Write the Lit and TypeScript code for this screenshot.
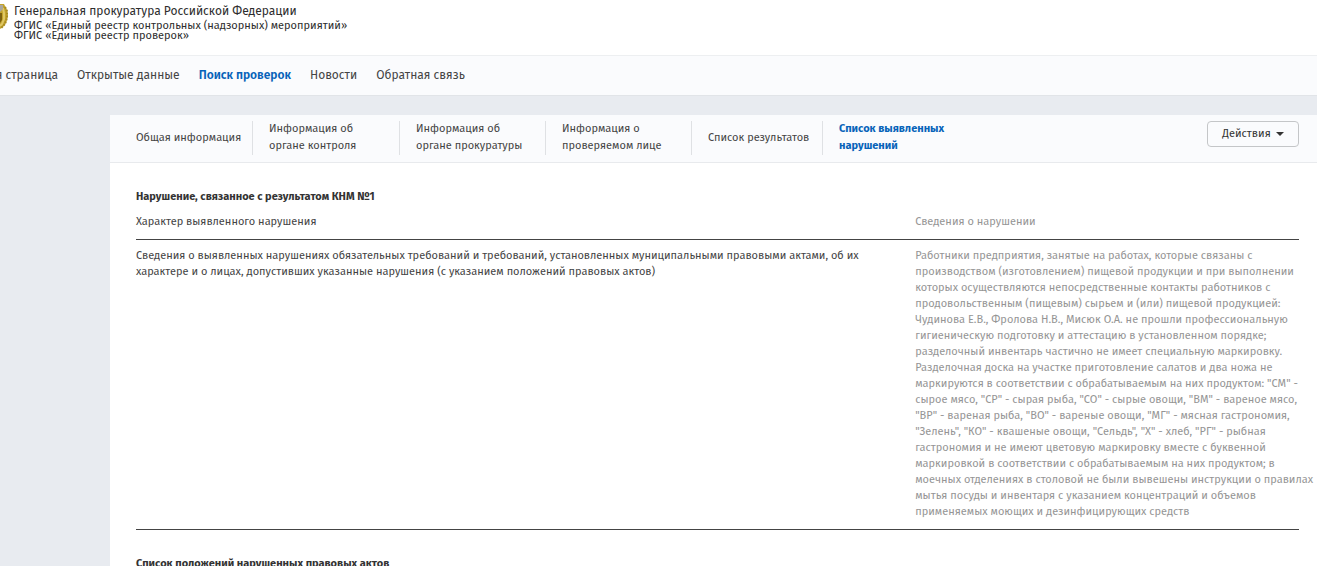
import { LitElement, html, css } from "lit";
import { customElement } from "lit/decorators.js";

const navItems = ["Главная страница", "Открытые данные", "Поиск проверок", "Новости", "Обратная связь"];

const tabs: string[][] = [
  ["Общая информация"],
  ["Информация об", "органе контроля"],
  ["Информация об", "органе прокуратуры"],
  ["Информация о", "проверяемом лице"],
  ["Список результатов"],
  ["Список выявленных", "нарушений"],
];

const nature = [
  "Сведения о выявленных нарушениях обязательных требований и требований, установленных муниципальными правовыми актами, об их",
  "характере и о лицах, допустивших указанные нарушения (с указанием положений правовых актов)",
];

const details = [
  "Работники предприятия, занятые на работах, которые связаны с",
  "производством (изготовлением) пищевой продукции и при выполнении",
  "которых осуществляются непосредственные контакты работников с",
  "продовольственным (пищевым) сырьем и (или) пищевой продукцией:",
  "Чудинова Е.В., Фролова Н.В., Мисюк О.А. не прошли профессиональную",
  "гигиеническую подготовку и аттестацию в установленном порядке;",
  "разделочный инвентарь частично не имеет специальную маркировку.",
  "Разделочная доска на участке приготовление салатов и два ножа не",
  'маркируются в соответствии с обрабатываемым на них продуктом: "СМ" -',
  'сырое мясо, "СР" - сырая рыба, "СО" - сырые овощи, "ВМ" - вареное мясо,',
  '"ВР" - вареная рыба, "ВО" - вареные овощи, "МГ" - мясная гастрономия,',
  '"Зелень", "КО" - квашеные овощи, "Сельдь", "Х" - хлеб, "РГ" - рыбная',
  "гастрономия и не имеют цветовую маркировку вместе с буквенной",
  "маркировкой в соответствии с обрабатываемым на них продуктом; в",
  "моечных отделениях в столовой не были вывешены инструкции о правилах",
  "мытья посуды и инвентаря с указанием концентраций и объемов",
  "применяемых моющих и дезинфицирующих средств",
];

const lines = (items: string[]) => items.map((line, i) => (i ? html`<br />${line}` : line));

@customElement("app-root")
export class AppRoot extends LitElement {
  static styles = css`
    :host {
      display: block;
      height: 100vh;
      overflow: hidden;
      background: #e8ebf0;
      color: #444;
      font: 11px/16px "Fira Sans", Roboto, "Noto Sans", sans-serif;
    }
    a {
      color: inherit;
      text-decoration: none;
      white-space: nowrap;
    }
    .header {
      display: flex;
      gap: 6px;
      height: 55px;
      background: #fff;
      color: #2d2d2d;
      line-height: 10px;
      white-space: nowrap;
    }
    .emblem {
      display: flex;
      justify-content: flex-end;
      width: 8px;
      overflow: hidden;
    }
    .emblem svg {
      flex: none;
    }
    .org {
      margin: 0;
      padding: 3px 0 2px;
      font-size: 12px;
      line-height: 16px;
      font-weight: 400;
    }
    .sub {
      margin: 0;
    }
    .nav {
      display: flex;
      align-items: center;
      gap: 19px;
      box-sizing: border-box;
      height: 41px;
      padding-bottom: 2px;
      background: #fafbfd;
      border-top: 1px solid #edeff1;
      border-bottom: 1px solid #e1e4e8;
      font-size: 12px;
    }
    .home {
      display: flex;
      justify-content: flex-end;
      width: 58px;
      overflow: hidden;
    }
    .current {
      color: #0763b9;
      font-weight: 700;
    }
    .nav .current {
      font-weight: 600;
    }
    .panel {
      margin: 19px 0 0 110px;
      min-height: 460px;
      background: #fff;
    }
    .bar {
      display: flex;
      align-items: flex-start;
      justify-content: space-between;
      padding: 6px 18px 7px 26px;
      background: #fafbfd;
      border-bottom: 1px solid #e8eaed;
    }
    .tabs {
      display: flex;
      line-height: 17px;
    }
    .tab {
      display: flex;
      align-items: center;
      box-sizing: border-box;
      width: 146px;
      height: 34px;
      padding: 0 0 2px 16px;
      border-left: 1px solid #dfe1e4;
    }
    .tab:first-child {
      width: 116px;
      padding-left: 0;
      border-left: 0;
    }
    .tab:nth-child(2) {
      width: 147px;
    }
    .tab:nth-child(5) {
      width: 131px;
    }
    .actions {
      display: flex;
      align-items: center;
      justify-content: center;
      gap: 5px;
      box-sizing: border-box;
      width: 92px;
      height: 26px;
      padding: 0;
      background: #fafbfd;
      border: 1px solid #c4c6c8;
      border-radius: 4px;
      color: #333;
      font: inherit;
    }
    .content {
      padding: 26px 18px 0 26px;
    }
    .title {
      margin: 0;
      color: #333;
      font-size: 11px;
      line-height: 16px;
      font-weight: 700;
    }
    .grid {
      width: 100%;
      margin: 0 0 26px;
      border-collapse: separate;
      border-spacing: 0;
      table-layout: fixed;
    }
    .grid th,
    .grid td {
      padding: 8px 0 9px;
      border-bottom: 1px solid #444;
      text-align: left;
      vertical-align: top;
      font-weight: 400;
      white-space: nowrap;
    }
    .grid th {
      padding-top: 9px;
    }
    .grid .info {
      width: 33%;
      color: #959595;
    }
  `;

  render() {
    return html`
      <header class="header">
        <div class="emblem">
          <svg width="28" height="32" viewBox="0 0 28 32" aria-hidden="true">
            <path d="M20 4h4l3 6 1 6-2 7-3 4-3 2H8L0 16 8 4z" fill="#c3a32c" />
            <path d="m25 7 2 4v7l-2 6-4 4" fill="none" stroke="#a98b20" stroke-width="2" stroke-dasharray="2 1" />
            <path d="m23 8 1 5v6l-2 5-2 2" fill="none" stroke="#dfc765" stroke-width="2" />
            <path d="M20 13h2v7l-2 3z" fill="#7d610f" />
            <path d="M20 5h3v4l-3 3z" fill="#aaa79e" />
          </svg>
        </div>
        <div>
          <h1 class="org">Генеральная прокуратура Российской Федерации</h1>
          <p class="sub">ФГИС «Единый реестр контрольных (надзорных) мероприятий»</p>
          <p class="sub">ФГИС «Единый реестр проверок»</p>
        </div>
      </header>
      <nav class="nav">
        ${navItems.map(
          (item, i) => html`<a href="#" class=${i === 0 ? "home" : i === 2 ? "current" : ""}><span>${item}</span></a>`
        )}
      </nav>
      <main class="panel">
        <div class="bar">
          <nav class="tabs">
            ${tabs.map(
              (tab, i) => html`<a href="#" class="tab ${i === 5 ? "current" : ""}"><span>${lines(tab)}</span></a>`
            )}
          </nav>
          <button class="actions" type="button">
            Действия
            <svg width="8" height="4" viewBox="0 0 8 4" aria-hidden="true"><path d="M0 0h8L4 4z" fill="#333" /></svg>
          </button>
        </div>
        <section class="content">
          <h2 class="title">Нарушение, связанное с результатом КНМ №1</h2>
          <table class="grid">
            <thead>
              <tr>
                <th scope="col">Характер выявленного нарушения</th>
                <th scope="col" class="info">Сведения о нарушении</th>
              </tr>
            </thead>
            <tbody>
              <tr>
                <td>${lines(nature)}</td>
                <td class="info">${lines(details)}</td>
              </tr>
            </tbody>
          </table>
          <h2 class="title">Список положений нарушенных правовых актов</h2>
        </section>
      </main>
    `;
  }
}
